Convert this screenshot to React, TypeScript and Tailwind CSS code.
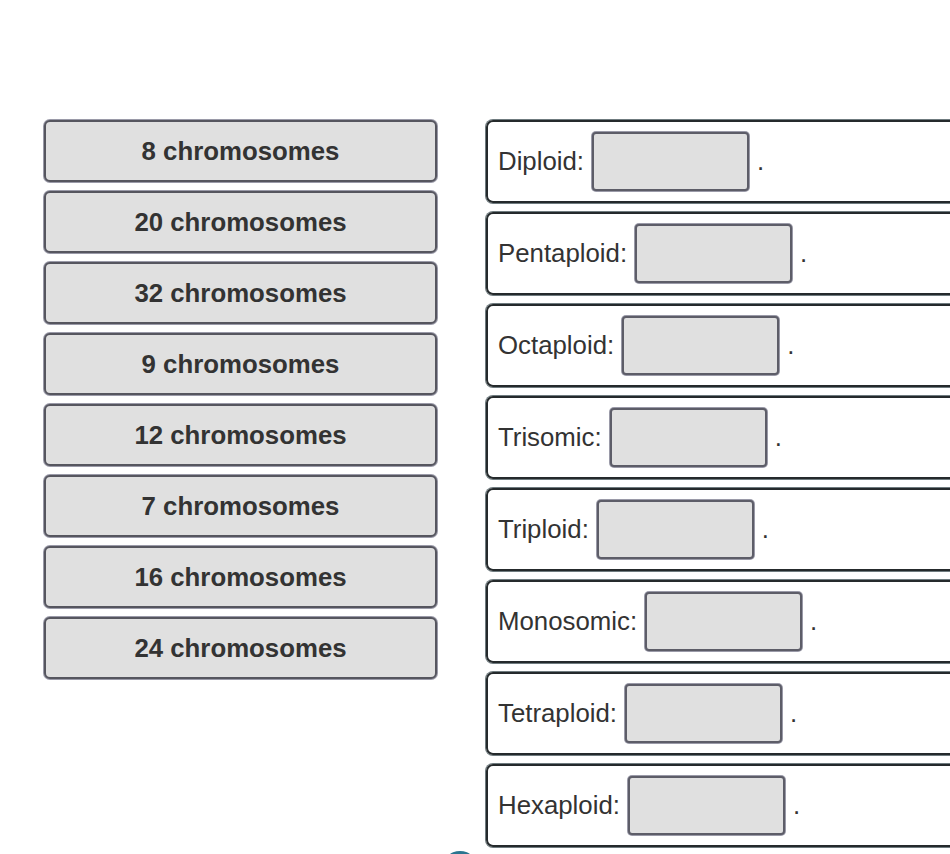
const chromosomes = [
  "8 chromosomes",
  "20 chromosomes",
  "32 chromosomes",
  "9 chromosomes",
  "12 chromosomes",
  "7 chromosomes",
  "16 chromosomes",
  "24 chromosomes",
];

const terms = [
  "Diploid:",
  "Pentaploid:",
  "Octaploid:",
  "Trisomic:",
  "Triploid:",
  "Monosomic:",
  "Tetraploid:",
  "Hexaploid:",
];

export default function App() {
  return (
    <div className="relative h-[854px] w-[950px] overflow-hidden bg-white font-['Liberation_Sans',Arial,sans-serif] text-[#333]">
      <div className="flex gap-[49px] pl-[44px] pt-[120px]">
        <div className="flex w-[393px] shrink-0 flex-col gap-[9px]">
          {chromosomes.map((c) => (
            <div
              key={c}
              className="flex h-[62px] items-center justify-center rounded-[6px] border-2 border-[#56565f] bg-[#e0e0e0] text-[25.8px] font-bold shadow-[0_0_0_1px_#9a9aa8]"
            >
              {c}
            </div>
          ))}
        </div>
        <div className="flex w-[500px] shrink-0 flex-col gap-[9px]">
          {terms.map((t) => (
            <div
              key={t}
              className="flex h-[83px] items-center rounded-[7px] border-2 border-[#252a2c] pl-[10px] text-[25.8px] shadow-[0_0_0_1px_#6f7b7f]"
            >
              <span>{t}</span>
              <div className="ml-[8px] h-[59px] w-[157px] rounded-[4px] border-2 border-[#5d5d68] bg-[#e0e0e0] shadow-[0_0_0_1px_#9a9aa8]" />
              <span className="ml-[8px]">.</span>
            </div>
          ))}
        </div>
      </div>
      <div className="absolute left-[442px] top-[851px] h-[36px] w-[36px] rounded-full bg-[#2b7590]" />
    </div>
  );
}
